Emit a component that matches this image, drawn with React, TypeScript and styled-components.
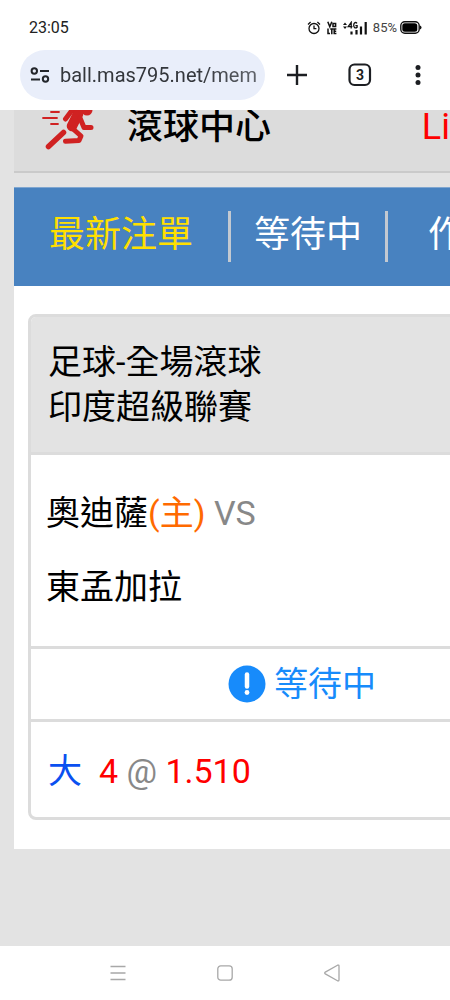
import React from 'react';
import styled, { createGlobalStyle } from 'styled-components';

const GlobalStyle = createGlobalStyle`
  * { box-sizing: border-box; }
  body {
    margin: 0;
    background: #e3e3e3;
    font-family: Roboto, "Noto Sans CJK TC", sans-serif;
    color: #000;
  }
  button, input { font: inherit; color: inherit; }
`;

const Screen = styled.div`
  display: flex;
  flex-direction: column;
  min-height: 100vh;
  overflow: hidden;
`;

const StatusBar = styled.header`
  display: flex;
  align-items: center;
  justify-content: space-between;
  height: 50px;
  padding: 5px 28px 0 29px;
  background: #fff;
  color: #222;
`;

const Clock = styled.time`
  font-size: 16px;
  line-height: 20px;
`;

const StatusIcons = styled.div`
  display: flex;
  align-items: center;
  gap: 6px;
  svg { display: block; }
`;

const Battery = styled.div`
  display: flex;
  align-items: center;
  gap: 3px;
`;

const Percent = styled.span`
  font-size: 13px;
  line-height: 20px;
  color: #444;
`;

const BrowserBar = styled.div`
  display: flex;
  align-items: center;
  height: 60px;
  padding: 0 6px 10px 20px;
  background: #fff;
`;

const Address = styled.label`
  display: flex;
  flex: 1;
  align-items: center;
  gap: 10px;
  min-width: 0;
  height: 50px;
  padding: 0 8px 0 10px;
  border-radius: 25px;
  background: #e9eefa;
  svg { flex: none; }
`;

const UrlInput = styled.input`
  flex: 1;
  min-width: 0;
  padding: 0;
  border: 0;
  outline: 0;
  background: none;
  font-size: 20px;
  line-height: 24px;
  color: #33363b;
  mask-image: linear-gradient(to right, #000 70%, rgba(0, 0, 0, 0.75));
`;

const IconButton = styled.button<{ $width: number }>`
  display: flex;
  align-items: center;
  justify-content: center;
  width: ${({ $width }) => $width}px;
  height: 50px;
  padding: 0;
  border: 0;
  background: none;
`;

const Page = styled.main`
  flex: 1;
  padding-left: 14px;
  overflow: hidden;
`;

const SiteHeader = styled.div`
  display: flex;
  align-items: center;
  height: 92px;
  margin-top: -29px;
  padding-left: 28px;
  border-bottom: 2px solid #cacaca;
  background: #dcdcdc;
  font-size: 36px;
  line-height: 48px;
`;

const SiteTitle = styled.h1`
  flex: 1;
  margin: 0 0 0 32px;
  padding-top: 2px;
  font-size: 36px;
  font-weight: 500;
`;

const LiveLink = styled.a`
  padding-top: 2px;
  color: #f00;
  text-decoration: none;
`;

const Tabs = styled.nav`
  display: flex;
  height: 99px;
  margin-top: 14px;
  padding: 23px 0 24px;
  border-top: 1px solid #7fa6d0;
  background: #4882c0;
  overflow: hidden;
`;

const Tab = styled.button<{ $active?: boolean; $pad: number }>`
  flex: none;
  padding: 0 ${({ $pad }) => $pad}px 4px;
  border: 0;
  border-right: 3px solid #c3c9d1;
  background: none;
  color: ${({ $active }) => ($active ? '#ffdf00' : '#fff')};
  font-size: 36px;
  line-height: 44px;
  &:last-child { border-right: 0; }
`;

const Content = styled.section`
  padding: 28px 0 29px 14px;
  background: #fff;
`;

const Card = styled.article`
  margin-right: -126px;
  border: 3px solid #dcdcdc;
  border-radius: 8px;
  font-size: 34px;
  overflow: hidden;
`;

const CardRow = styled.div`
  border-bottom: 3px solid #dcdcdc;
  &:last-child { border-bottom: 0; }
`;

const League = styled(CardRow)`
  padding: 23px 17px 22px;
  background: #e3e3e3;
  line-height: 45px;
`;

const Teams = styled(CardRow)`
  padding: 21px 15px 22px;
  line-height: 74px;
`;

const Waiting = styled(CardRow)`
  display: flex;
  align-items: center;
  justify-content: center;
  gap: 8px;
  height: 73px;
  line-height: 48px;
  color: #178bfb;
`;

const Pick = styled(CardRow)`
  padding: 24px 17px 21px;
  line-height: 50px;
  white-space: pre;
`;

const Tint = styled.span<{ $color: string }>`
  color: ${({ $color }) => $color};
`;

const SystemNav = styled.nav`
  display: flex;
  align-items: flex-end;
  justify-content: center;
  height: 54px;
  padding-bottom: 2px;
  background: #fff;
`;

function AlarmIcon() {
  return (
    <svg width="14" height="14" viewBox="0 0 14 14" fill="none" stroke="#111" strokeWidth="1.3">
      <circle cx="7" cy="7.5" r="5" />
      <path d="M7 4.5v3.2h2.4M1 3.4l2.6-2.3M13 3.4l-2.6-2.3" />
    </svg>
  );
}

function VolteIcon() {
  return (
    <svg width="10" height="14" viewBox="0 0 10 14" fill="none" stroke="#111" strokeWidth="1.5">
      <path d="M.8 .8l2 5 2-5M6 2.4h2.6v3.2H6zM1 7.5v5h2M3.2 8h3.2M4.8 8v5.2M9.4 8H7.2v4.6h2.2M7.2 10.3h2" />
    </svg>
  );
}

function SignalIcon() {
  return (
    <svg width="24" height="14" viewBox="0 0 24 14" fill="none" stroke="#111">
      <path d="M0 4L2 1.500 4 4zM0 5.600h4L2 8z" fill="#111" stroke="none" />
      <path d="M8.200 7.500V1.400L5.200 5.600h4.200M14 2.300C12.800 .9 10.700 1.300 10.700 4.200s2.100 3.300 3.400 2.100V4.600h-1.700" strokeWidth="1.300" />
      <path d="M8.500 10.500v3M13.500 9v4.500M18 5.500v8M22.700 1v12.500" strokeWidth="2.200" />
    </svg>
  );
}

function BatteryIcon() {
  return (
    <svg width="22" height="13" viewBox="0 0 22 13">
      <rect x=".8" y=".8" width="18.400" height="11.400" rx="4" fill="none" stroke="#111" strokeWidth="1.400" />
      <rect x="2.300" y="2.300" width="15" height="8.400" rx="2.500" fill="#000" />
      <path d="M20 4.500q1.500.5 1.500 2t-1.500 2z" fill="#111" />
    </svg>
  );
}

function SiteSettingsIcon() {
  return (
    <svg width="20" height="18" viewBox="0 0 20 18" fill="none" stroke="#23262b" strokeWidth="2">
      <circle cx="4.300" cy="5" r="2.700" />
      <path d="M10 5h9M1 13.500h9" />
      <circle cx="15.500" cy="13" r="2.700" />
    </svg>
  );
}

function RunnerLogo() {
  return (
    <svg width="53" height="56" viewBox="0 0 53 56" fill="none" stroke="#d02222" strokeLinecap="round" strokeLinejoin="round">
      <path d="M9 14h8M1 20h14M9 26h7" strokeWidth="1.800" />
      <circle cx="45" cy="12" r="5.500" fill="#d02222" stroke="none" />
      <path d="M23.500 21l6-8h8" strokeWidth="5" />
      <path d="M36 16L30 28" strokeWidth="10.500" />
      <path d="M38 20l4 9.500h7" strokeWidth="5" />
      <path d="M30 30l9 8-2 4.500-13.500.8" strokeWidth="5" />
      <path d="M21.500 34.500L6.500 48.500" strokeWidth="5.500" />
    </svg>
  );
}

export default function App() {
  return (
    <>
      <GlobalStyle />
      <Screen>
        <StatusBar>
          <Clock>23:05</Clock>
          <StatusIcons>
            <AlarmIcon />
            <VolteIcon />
            <SignalIcon />
            <Battery>
              <Percent>85%</Percent>
              <BatteryIcon />
            </Battery>
          </StatusIcons>
        </StatusBar>
        <BrowserBar>
          <Address>
            <SiteSettingsIcon />
            <UrlInput aria-label="Address" defaultValue="ball.mas795.net/mem" />
          </Address>
          <IconButton $width={64} aria-label="New tab">
            <svg width="20" height="20" viewBox="0 0 20 20" stroke="#1c1e22" strokeWidth="2.400">
              <path d="M10 0v20M0 10h20" />
            </svg>
          </IconButton>
          <IconButton $width={62} aria-label="Tabs">
            <svg width="24" height="24" viewBox="0 0 24 24">
              <rect x="1.500" y="1.500" width="20.500" height="20.500" rx="5" fill="none" stroke="#1c1e22" strokeWidth="2.200" />
              <text x="12" y="17" textAnchor="middle" fontSize="14" fontWeight="700" fill="#1c1e22">3</text>
            </svg>
          </IconButton>
          <IconButton $width={53} aria-label="Menu">
            <svg width="6" height="20" viewBox="0 0 6 20" fill="#1c1e22">
              <circle cx="3" cy="2.500" r="2.500" />
              <circle cx="3" cy="10" r="2.500" />
              <circle cx="3" cy="17.500" r="2.500" />
            </svg>
          </IconButton>
        </BrowserBar>
        <Page>
          <SiteHeader>
            <RunnerLogo />
            <SiteTitle>滾球中心</SiteTitle>
            <LiveLink href="#live">Li</LiveLink>
          </SiteHeader>
          <Tabs>
            <Tab $active $pad={35}>最新注單</Tab>
            <Tab $pad={23}>等待中</Tab>
            <Tab $pad={40}>作</Tab>
          </Tabs>
          <Content>
            <Card>
              <League>
                <div>足球-全場滾球</div>
                <div>印度超級聯賽</div>
              </League>
              <Teams>
                <div>
                  奧迪薩<Tint $color="#ff6a00">(主)</Tint> <Tint $color="#888">VS</Tint>
                </div>
                <div>東孟加拉</div>
              </Teams>
              <Waiting>
                <svg width="38" height="38" viewBox="0 0 38 38">
                  <circle cx="19" cy="19" r="18.500" fill="#178bfb" />
                  <path d="M19 9.500v12" stroke="#fff" strokeWidth="4.500" strokeLinecap="round" />
                  <circle cx="19" cy="27.500" r="2.400" fill="#fff" />
                </svg>
                <span>等待中</span>
              </Waiting>
              <Pick>
                <Tint $color="#0a50f0">大</Tint>
                {'  '}
                <Tint $color="#f00">4</Tint> <Tint $color="#888">@</Tint> <Tint $color="#f00">1.510</Tint>
              </Pick>
            </Card>
          </Content>
        </Page>
        <SystemNav>
          <IconButton $width={107} aria-label="Recent apps">
            <svg width="16" height="16" viewBox="0 0 16 16" stroke="#a8a8a8" strokeWidth="1.300">
              <path d="M.5 1.500h15M.5 8h15M.5 14.500h15" />
            </svg>
          </IconButton>
          <IconButton $width={107} aria-label="Home">
            <svg width="16" height="16" viewBox="0 0 16 16" fill="none" stroke="#a8a8a8" strokeWidth="1.300">
              <rect x=".8" y=".8" width="14.400" height="14.400" rx="3" />
            </svg>
          </IconButton>
          <IconButton $width={107} aria-label="Back">
            <svg width="16" height="18" viewBox="0 0 16 18" fill="none" stroke="#a8a8a8" strokeWidth="1.300" strokeLinejoin="round">
              <path d="M1.300 8.100L13.500 1.200q1.500-.6 1.500 1v13.600q0 1.600-1.500 1L1.300 9.900q-1.200-.9 0-1.800z" />
            </svg>
          </IconButton>
        </SystemNav>
      </Screen>
    </>
  );
}
